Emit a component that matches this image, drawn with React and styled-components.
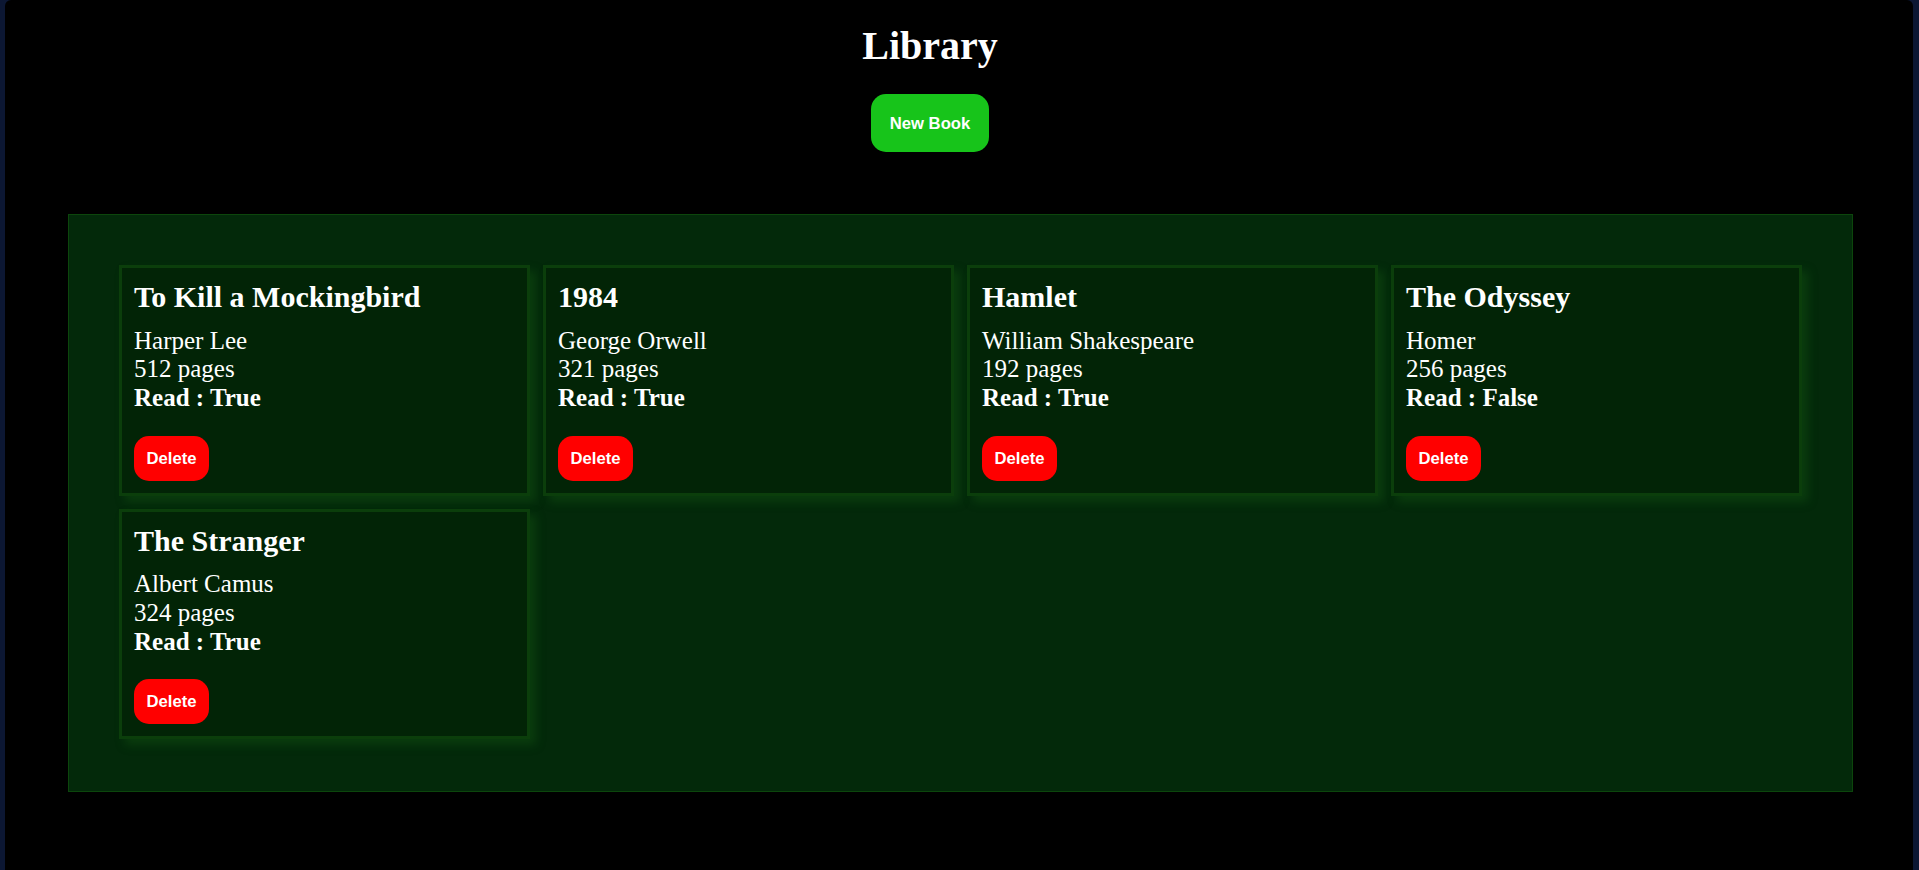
import React, { useState } from 'react';
import styled, { createGlobalStyle } from 'styled-components';

const initialBooks = [
  { id: 1, title: 'To Kill a Mockingbird', author: 'Harper Lee', pages: 512, read: true },
  { id: 2, title: '1984', author: 'George Orwell', pages: 321, read: true },
  { id: 3, title: 'Hamlet', author: 'William Shakespeare', pages: 192, read: true },
  { id: 4, title: 'The Odyssey', author: 'Homer', pages: 256, read: false },
  { id: 5, title: 'The Stranger', author: 'Albert Camus', pages: 324, read: true },
];

const App = () => {
  const [books, setBooks] = useState(initialBooks);

  const deleteBook = (id) => {
    setBooks(books.filter((book) => book.id !== id));
  };

  return (
    <>
      <GlobalStyle />
      <Header>
        <Title>Library</Title>
        <Button type="button" $variant="add">
          New Book
        </Button>
      </Header>

      <Shelf>
        {books.map((book) => (
          <Card key={book.id}>
            <BookTitle>{book.title}</BookTitle>
            <Line>{book.author}</Line>
            <Line>{book.pages} pages</Line>
            <Line $bold>Read : {book.read ? 'True' : 'False'}</Line>
            <Button type="button" $variant="delete" onClick={() => deleteBook(book.id)}>
              Delete
            </Button>
          </Card>
        ))}
      </Shelf>
    </>
  );
};

// Styled components
const GlobalStyle = createGlobalStyle`
  html {
    background: #0c1733;
    height: 100%;
  }

  body {
    margin: 0 6px 0 5px;
    min-height: 100%;
    background: #000;
    border-radius: 6px 6px 0 0;
    font-family: "Liberation Serif", "Times New Roman", serif;
    color: #fff;
  }
`;

const Header = styled.header`
  display: flex;
  flex-direction: column;
  align-items: center;
  padding: 23px 58px 0 0;
`;

const Title = styled.h1`
  margin: 0 0 25px;
  font-size: 40px;
  line-height: 46px;
  font-weight: bold;
`;

const Button = styled.button`
  border: none;
  outline: none;
  cursor: pointer;
  color: #fff;
  font-family: "Liberation Sans", Arial, sans-serif;
  font-weight: bold;
  font-size: 16.67px;
  line-height: 19px;
  border-radius: 15px;
  padding: ${(props) => (props.$variant === 'add' ? '19.5px 18.5px' : '13px 12.5px')};
  background: ${(props) => (props.$variant === 'add' ? '#17c41a' : '#ff0000')};
  margin-top: ${(props) => (props.$variant === 'add' ? '0' : '23px')};
  align-self: ${(props) => (props.$variant === 'add' ? 'center' : 'flex-start')};
`;

const Shelf = styled.main`
  margin: 62px 60px 0 63px;
  padding: 50px 50px 52px;
  background: #03290a;
  border: 1px solid #0c460c;
  display: grid;
  grid-template-columns: repeat(4, 1fr);
  gap: 13px;
  align-items: start;
`;

const Card = styled.div`
  display: flex;
  flex-direction: column;
  padding: 12px;
  background: #022406;
  border: 3px solid #0b3e0b;
  box-shadow: 6px 6px 9px rgba(20, 90, 20, 0.4);
`;

const BookTitle = styled.h2`
  margin: 0 0 12px;
  font-size: 30px;
  line-height: 34.5px;
  font-weight: bold;
`;

const Line = styled.p`
  margin: 0;
  font-size: 25px;
  line-height: 28.7px;
  font-weight: ${(props) => (props.$bold ? 'bold' : 'normal')};
`;

export default App;
